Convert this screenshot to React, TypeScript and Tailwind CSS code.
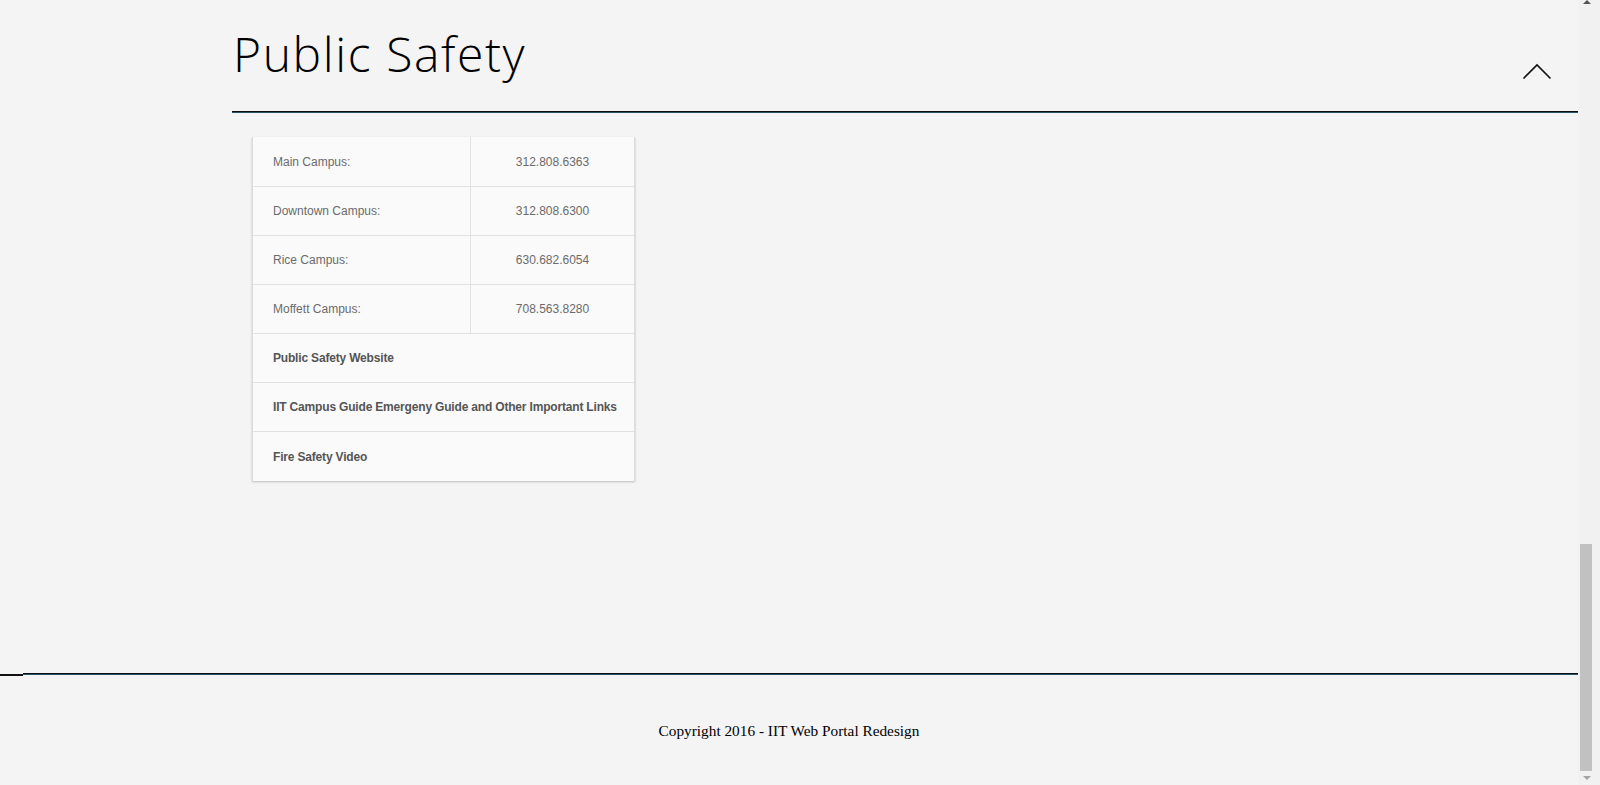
import React from "react";

const phones = [
  { label: "Main Campus:", num: "312.808.6363" },
  { label: "Downtown Campus:", num: "312.808.6300" },
  { label: "Rice Campus:", num: "630.682.6054" },
  { label: "Moffett Campus:", num: "708.563.8280" },
];

const links = [
  "Public Safety Website",
  "IIT Campus Guide Emergeny Guide and Other Important Links",
  "Fire Safety Video",
];

export default function App() {
  return (
    <div className="flex h-[785px] w-[1600px] overflow-hidden bg-[#f4f4f4]">
      <div className="flex w-[1578px] flex-col">
        <div className="pl-[232px]">
          <div className="flex h-[111px] items-start justify-between">
            <h1
              className="pl-[1px] pt-[30px] text-[48px] font-light leading-[48px] tracking-[1.6px] text-black"
              style={{ fontFamily: "'Open Sans', Lato, sans-serif" }}
            >
              Public Safety
            </h1>
            <svg
              width="30"
              height="18"
              viewBox="0 0 30 18"
              className="mr-[26px] mt-[62px]"
            >
              <path d="M1.5 16.5 L15 3 L28.5 16.5" fill="none" stroke="#111" strokeWidth="1.6" />
            </svg>
          </div>
          <div className="h-[2px] border-t border-[#0b0f12] bg-[#2a5266]" />
          <div className="pl-[20px] pt-[24px]">
            <div
              className="w-[383px] border-x border-[#dcdcdc] bg-[#fafafa] text-[12px] shadow-[0_1px_2px_rgba(0,0,0,0.22)]"
              style={{ fontFamily: "'Liberation Sans', Arial, sans-serif" }}
            >
              {phones.map((p, i) => (
                <div
                  key={p.label}
                  className={
                    "flex border-b border-[#e1e1e1]" + (i === 0 ? " h-[50px]" : " h-[49px]")
                  }
                >
                  <div className="flex w-[218px] items-center border-r border-[#e1e1e1] pl-[20px] text-[#6b6b6b]">
                    {p.label}
                  </div>
                  <div className="flex flex-1 items-center justify-center text-[#6b6b6b]">
                    {p.num}
                  </div>
                </div>
              ))}
              {links.map((l, i) => (
                <div
                  key={l}
                  className={
                    "flex h-[49px] items-center pl-[20px] font-bold tracking-[-0.18px] text-[#555]" +
                    (i < links.length - 1 ? " border-b border-[#e1e1e1]" : "")
                  }
                >
                  {l}
                </div>
              ))}
            </div>
          </div>
        </div>
        <div className="mt-[192px] flex items-start">
          <div className="mt-[1px] h-[2px] w-[23px] bg-[#111]" />
          <div className="h-[2px] flex-1 border-t border-[#0b0f12] bg-[#2a5266]" />
        </div>
        <p
          className="mt-[46px] text-center text-[15.3px] leading-[18px] text-black"
          style={{ fontFamily: "'Liberation Serif', 'Times New Roman', serif" }}
        >
          Copyright 2016 - IIT Web Portal Redesign
        </p>
      </div>
      <div className="flex w-[22px] flex-col bg-[#f1f1f1]">
        <div className="flex h-[14px] w-[17px] items-start justify-center">
          <div className="h-0 w-0 border-x-[4px] border-b-[4px] border-x-transparent border-b-[#555]" />
        </div>
        <div className="flex-1" />
        <div className="ml-[2px] h-[227px] w-[12px] bg-[#c1c1c1]" />
        <div className="flex h-[14px] w-[17px] items-center justify-center">
          <div className="h-0 w-0 border-x-[4px] border-t-[4px] border-x-transparent border-t-[#a3a3a3]" />
        </div>
      </div>
    </div>
  );
}
